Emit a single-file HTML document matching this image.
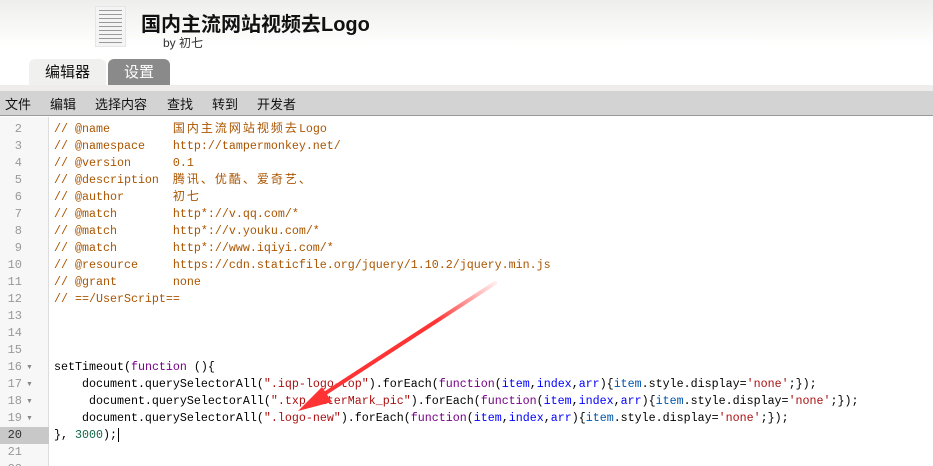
<!DOCTYPE html>
<html><head><meta charset="utf-8"><style>
*{margin:0;padding:0;box-sizing:border-box}
html,body{width:933px;height:466px;overflow:hidden}
body{background:#fff;font-family:"Liberation Sans","Noto Sans CJK SC",sans-serif;position:relative}
.hdr{position:absolute;left:0;top:0;width:933px;height:85px;background:linear-gradient(#eeeeec,#fff 55%)}
.icon{position:absolute;left:95px;top:6px;width:31px;height:41px;background:#f4f4f4;border:1px solid #e6e6e6}
.icon i{display:block;height:1px;background:#999;margin:3px 3px 0 3px}
.title{position:absolute;left:141px;top:8px;font-size:20px;font-weight:bold;color:#111}
.by{position:absolute;left:163px;top:34px;font-size:12px;color:#333}
.tab{position:absolute;top:59px;height:26px;font-size:15px;text-align:center;line-height:28px;border-radius:6px 6px 0 0}
.strip{position:absolute;left:0;top:85px;width:933px;height:6px;background:#eeedeb}
.menu{position:absolute;left:0;top:91px;width:933px;height:25px;background:#d3d3d3;border-bottom:1px solid #999;font-size:13px;color:#111}
.menu span{position:absolute;top:3px}
.gut{position:absolute;left:0;top:117px;width:49px;height:349px;background:#f7f7f7;border-right:1px solid #ddd}
.ln{position:absolute;left:0;width:22px;text-align:right;font-family:"Liberation Mono",monospace;font-size:12px;color:#999;height:17px;line-height:17px}
.fd{position:absolute;left:26px;font-size:7px;color:#888;line-height:17px}
.cl{position:absolute;left:54px;font-family:"Liberation Mono","Noto Sans CJK SC",monospace;font-size:11.67px;white-space:pre;height:17px;line-height:17px;color:#000;overflow:visible}
.z{font-family:"Noto Sans CJK SC",sans-serif;font-size:12px;letter-spacing:2px;line-height:1px}
.c{color:#a50}.s{color:#a11}.k{color:#708}.n{color:#164}.v{color:#00f}.d{color:#05a}
</style></head><body>
<div class="hdr"></div>
<div class="icon"><i></i><i></i><i></i><i></i><i></i><i></i><i></i><i></i><i></i></div>
<div class="title">国内主流网站视频去Logo</div>
<div class="by">by 初七</div>
<div class="tab" style="left:29px;width:77px;background:#f0f0ee;color:#111">编辑器</div>
<div class="tab" style="left:108px;width:62px;background:#8a8a8a;color:#fff">设置</div>
<div class="strip"></div>
<div class="menu"><span style="left:5px">文件</span><span style="left:50px">编辑</span><span style="left:95px">选择内容</span><span style="left:167px">查找</span><span style="left:212px">转到</span><span style="left:257px">开发者</span></div>
<div class="gut"></div>
<div style="position:absolute;left:0;top:427px;width:49px;height:17px;background:#c8c8c8"></div>
<div id="lines"></div>
<script>
var L=[
'<span class="c">// @name         <span class="z">国内主流网站视频去</span>Logo</span>',
'<span class="c">// @namespace    http://tampermonkey.net/</span>',
'<span class="c">// @version      0.1</span>',
'<span class="c">// @description  <span class="z">腾讯、优酷、爱奇艺、</span></span>',
'<span class="c">// @author       <span class="z">初七</span></span>',
'<span class="c">// @match        http*://v.qq.com/*</span>',
'<span class="c">// @match        http*://v.youku.com/*</span>',
'<span class="c">// @match        http*://www.iqiyi.com/*</span>',
'<span class="c">// @resource     https://cdn.staticfile.org/jquery/1.10.2/jquery.min.js</span>',
'<span class="c">// @grant        none</span>',
'<span class="c">// ==/UserScript==</span>',
'','','',
'setTimeout(<span class="k">function</span> (){',
'    document.querySelectorAll(<span class="s">".iqp-logo-top"</span>).forEach(<span class="k">function</span>(<span class="v">item</span>,<span class="v">index</span>,<span class="v">arr</span>){<span class="d">item</span>.style.display=<span class="s">\'none\'</span>;});',
'     document.querySelectorAll(<span class="s">".txp_waterMark_pic"</span>).forEach(<span class="k">function</span>(<span class="v">item</span>,<span class="v">index</span>,<span class="v">arr</span>){<span class="d">item</span>.style.display=<span class="s">\'none\'</span>;});',
'    document.querySelectorAll(<span class="s">".logo-new"</span>).forEach(<span class="k">function</span>(<span class="v">item</span>,<span class="v">index</span>,<span class="v">arr</span>){<span class="d">item</span>.style.display=<span class="s">\'none\'</span>;});',
'}, <span class="n">3000</span>);<span style="border-left:1px solid #000;margin-left:1px"></span>',
'',''];
var h='';
for(var i=0;i<L.length;i++){var n=i+2,t=121+i*17;
h+='<div class="ln" style="top:'+t+'px;'+(n==20?'color:#333':'')+'">'+n+'</div>';
if(n>=16&&n<=19)h+='<div class="fd" style="top:'+t+'px">▼</div>';
h+='<div class="cl" style="top:'+t+'px">'+L[i]+'</div>';}
document.getElementById('lines').innerHTML=h;
</script>
<svg style="position:absolute;left:0;top:0" width="933" height="466">
<defs><linearGradient id="g" x1="495" y1="283" x2="300" y2="410" gradientUnits="userSpaceOnUse"><stop offset="0" stop-color="#f44" stop-opacity="0.1"/><stop offset="0.3" stop-color="#f33"/><stop offset="1" stop-color="#f33"/></linearGradient></defs>
<path d="M495 283 L318 398" stroke="url(#g)" stroke-width="4" stroke-linecap="round"/>
<path d="M298 411 L322 387 L332 402 Z" fill="#f33"/>
</svg>
</body></html>
